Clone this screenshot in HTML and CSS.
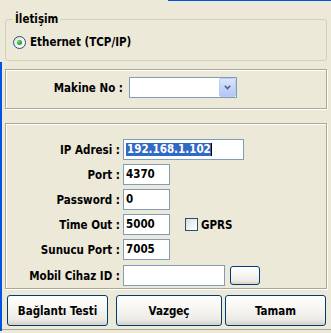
FILE: index.html
```html
<!DOCTYPE html>
<html lang="tr">
<head>
<meta charset="utf-8">
<title>İletişim</title>
<link rel="stylesheet" href="styles.css">
</head>
<body>
<div class="edge-top"></div>
<div class="edge-left"></div>
<div class="main">
  <fieldset class="group">
    <legend>İletişim</legend>
    <div class="radio-row">
      <span class="radio"><span class="dot"></span></span>
      <span class="radio-text">Ethernet (TCP/IP)</span>
    </div>
  </fieldset>

  <div class="panel panel-machine">
    <div class="label machine-label">Makine No :</div>
    <div class="combo">
      <div class="combo-btn">
        <svg width="7" height="5" viewBox="0 0 7 5"><path d="M0.8 0.8 L3.5 3.5 L6.2 0.8" fill="none" stroke="#4D6185" stroke-width="1.6"/></svg>
      </div>
    </div>
  </div>

  <div class="panel panel-form">
    <div class="label">IP Adresi :</div>
    <div class="cell"><div class="field w-ip"><span class="selected">192.168.1.102</span></div></div>

    <div class="label">Port :</div>
    <div class="cell"><div class="field w-sm">4370</div></div>

    <div class="label">Password :</div>
    <div class="cell"><div class="field w-sm">0</div></div>

    <div class="label">Time Out :</div>
    <div class="cell">
      <div class="field w-sm">5000</div>
      <span class="check"></span>
      <span class="check-text">GPRS</span>
    </div>

    <div class="label">Sunucu Port :</div>
    <div class="cell"><div class="field w-sm">7005</div></div>

    <div class="label last">Mobil Cihaz ID :</div>
    <div class="cell last">
      <div class="field w-mob"></div>
      <div class="btn btn-small"></div>
    </div>
  </div>
</div>

<div class="buttons">
  <div class="btn btn-test">Bağlantı Testi</div>
  <div class="btn btn-cancel">Vazgeç</div>
  <div class="btn btn-ok">Tamam</div>
</div>
</body>
</html>
```

FILE: styles.css
```css
* { box-sizing: border-box; }

html, body {
  margin: 0;
  padding: 0;
}

body {
  width: 331px;
  height: 333px;
  overflow: hidden;
  position: relative;
  background: #ECE9D8;
  color: #000;
  font-family: "DejaVu Sans Condensed", "Liberation Sans", Arial, sans-serif;
  font-weight: bold;
  font-size: 11.5px;
}

.edge-top {
  position: absolute;
  top: 0;
  left: 168px;
  right: 0;
  height: 1px;
  background: #0054E3;
}

.edge-left {
  position: absolute;
  top: 62px;
  bottom: 2px;
  left: 0;
  width: 2px;
  background: #0054E3;
}

.main {
  padding: 0 4px 0 5px;
}

/* Group box */
.group {
  margin: 12px 0 0;
  padding: 9px 0 11px 7px;
  border: 1px solid #D0D0BF;
  border-radius: 3px;
  min-width: 0;
}

.group legend {
  padding: 0 2px;
  line-height: 15px;
}

.radio-row {
  display: flex;
  align-items: center;
  height: 13px;
  line-height: 13px;
}

.radio {
  width: 13px;
  height: 13px;
  border-radius: 50%;
  border: 1px solid #1C5180;
  background: linear-gradient(135deg, #DCDCD7 0%, #F4F4F1 55%, #FFFFFF 100%);
  display: flex;
  align-items: center;
  justify-content: center;
}

.dot {
  width: 5px;
  height: 5px;
  border-radius: 50%;
  background: radial-gradient(circle at 35% 35%, #6BD36B 0%, #21A121 70%, #1A8A1A 100%);
}

.radio-text {
  margin-left: 4px;
}

/* Etched panels */
.panel {
  border: 1px solid #ACA899;
  box-shadow: inset 1px 1px 0 #fff, 1px 1px 0 #fff;
}

.panel-machine {
  margin-top: 8px;
  padding: 7px 0 10px;
  display: flex;
  align-items: center;
}

.label {
  text-align: right;
  white-space: nowrap;
  align-self: center;
}

.machine-label {
  width: 117px;
}

.combo {
  margin-left: 6px;
  width: 108px;
  height: 21px;
  border: 1px solid #7F9DB9;
  background: #fff;
  display: flex;
  justify-content: flex-end;
}

.combo-btn {
  width: 17px;
  height: 19px;
  border: 1px solid #BACBF4;
  border-radius: 2px;
  background: linear-gradient(to bottom, #DCE6FD 0%, #C4D4FA 50%, #B3C6F5 100%);
  display: flex;
  align-items: center;
  justify-content: center;
}

.panel-form {
  margin-top: 14px;
  padding: 15px 0 3px;
  display: grid;
  grid-template-columns: 114px 1fr;
  grid-auto-rows: 21px;
  column-gap: 3px;
  row-gap: 4px;
}

.panel-form .last {
  margin-top: 2px;
}

.cell {
  display: flex;
  align-items: center;
}

.field {
  height: 21px;
  border: 1px solid #7F9DB9;
  background: #fff;
  padding: 0 2px;
  line-height: 19px;
  white-space: nowrap;
}

.w-ip { width: 121px; }
.w-sm { width: 47px; }
.w-mob { width: 102px; }

.selected {
  display: inline-block;
  vertical-align: top;
  margin-top: 3px;
  line-height: 13px;
  background: #316AC5;
  color: #fff;
  padding: 0 0 0 1px;
  border-right: 1px solid #000;
}

.check {
  margin-left: 15px;
  width: 13px;
  height: 13px;
  border: 1px solid #1C5180;
  background: linear-gradient(135deg, #DCDCD7 0%, #F0F0EA 50%, #FFFFFF 100%);
}

.check-text {
  margin-left: 3px;
}

/* XP buttons */
.btn {
  border: 1px solid #003C74;
  border-radius: 3px;
  background: linear-gradient(to bottom, #FFFFFF 0%, #F6F5F1 45%, #ECEBE6 80%, #D6D0C5 100%);
  display: flex;
  align-items: center;
  justify-content: center;
  white-space: nowrap;
}

.btn-small {
  margin-left: 5px;
  width: 30px;
  height: 19px;
}

.buttons {
  display: flex;
  height: 41px;
  padding: 6px 0 0 7px;
  border-bottom: 1px solid #ACA899;
}

.buttons .btn {
  height: 31px;
}

.btn-test { width: 101px; }
.btn-cancel { width: 106px; margin-left: 8px; }
.btn-ok { width: 101px; margin-left: 3px; }
```
